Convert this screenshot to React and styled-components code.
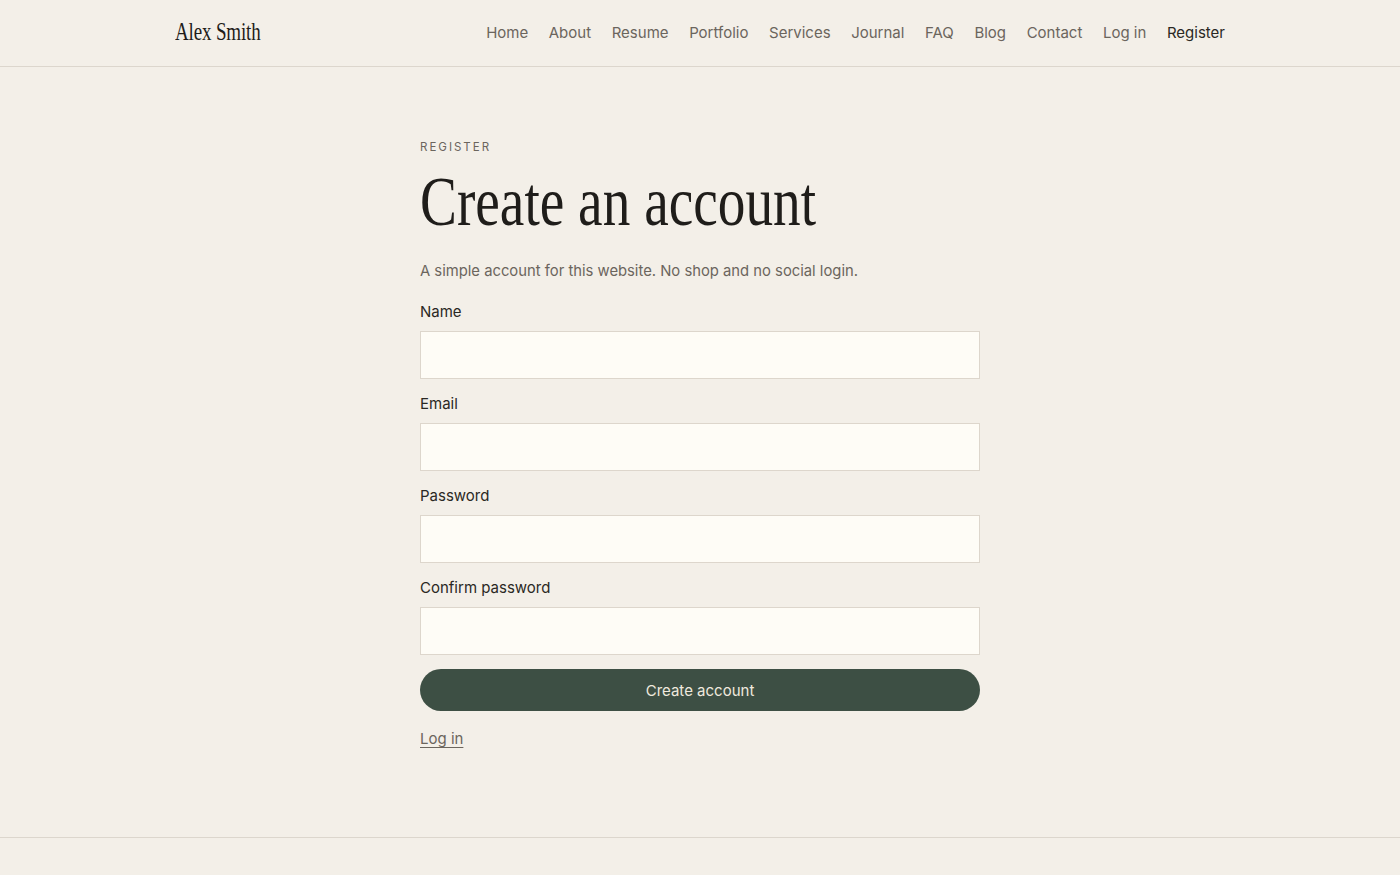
import React from 'react'
import styled, { createGlobalStyle } from 'styled-components'

const navLinks = [
  'Home',
  'About',
  'Resume',
  'Portfolio',
  'Services',
  'Journal',
  'FAQ',
  'Blog',
  'Contact',
  'Log in',
  'Register'
]

const fields = [
  { id: 'name', label: 'Name', type: 'text' },
  { id: 'email', label: 'Email', type: 'email' },
  { id: 'password', label: 'Password', type: 'password' },
  { id: 'confirm', label: 'Confirm password', type: 'password' }
]

export default function App() {
  return (
    <>
      <GlobalStyle />
      <Header>
        <HeaderInner>
          <Logo href="#">Alex Smith</Logo>
          <Nav>
            {navLinks.map(link => (
              <NavLink key={link} href="#" $active={link === 'Register'}>
                {link}
              </NavLink>
            ))}
          </Nav>
        </HeaderInner>
      </Header>

      <Main>
        <Column>
          <Eyebrow>Register</Eyebrow>
          <Title>
            <span>Create an account</span>
          </Title>
          <Lead>A simple account for this website. No shop and no social login.</Lead>

          <Form onSubmit={e => e.preventDefault()}>
            {fields.map(field => (
              <Field key={field.id}>
                <Label htmlFor={field.id}>{field.label}</Label>
                <Input id={field.id} type={field.type} />
              </Field>
            ))}
            <Submit type="submit">Create account</Submit>
          </Form>

          <LoginLink href="#">Log in</LoginLink>
        </Column>
      </Main>

      <Footer />
    </>
  )
}

const GlobalStyle = createGlobalStyle`
  * { box-sizing: border-box; }
  body {
    margin: 0;
    background: #f3efe8;
    color: #1f1d1a;
    font-family: Inter, "Noto Sans", sans-serif;
  }
`

const Header = styled.header`
  height: 67px;
  border-bottom: 1px solid #dcd6cd;
`

const HeaderInner = styled.div`
  width: 1050px;
  height: 100%;
  margin: 0 auto;
  padding-bottom: 2px;
  display: flex;
  align-items: center;
  justify-content: space-between;
`

const Logo = styled.a`
  font-family: "Liberation Serif", serif;
  font-size: 25px;
  color: #1f1d1a;
  text-decoration: none;
  display: inline-block;
  transform: scaleX(0.76);
  transform-origin: left center;
  letter-spacing: -0.2px;
`

const Nav = styled.nav`
  display: flex;
  gap: 20.6px;
`

const NavLink = styled.a`
  font-size: 15px;
  color: ${p => (p.$active ? '#2a2824' : '#6b655d')};
  text-decoration: none;
`

const Main = styled.main`
  padding: 72px 0 88px;
  border-bottom: 1px solid #dcd6cd;
`

const Column = styled.div`
  width: 560px;
  margin: 0 auto;
`

const Eyebrow = styled.div`
  font-size: 11.5px;
  letter-spacing: 2px;
  text-transform: uppercase;
  color: #6b655d;
  line-height: 16px;
`

const Title = styled.h1`
  margin: 5px 0 0;
  font-family: "Liberation Serif", serif;
  font-weight: 400;
  font-size: 70px;
  line-height: 84px;
  white-space: nowrap;
  color: #1f1d1a;

  span {
    display: inline-block;
    transform: scaleX(0.79);
    transform-origin: left center;
  }
`

const Lead = styled.p`
  margin: 16px 0 0;
  font-size: 14.8px;
  line-height: 22px;
  color: #6b655d;
`

const Form = styled.form`
  margin-top: 20px;
  display: flex;
  flex-direction: column;
  gap: 15px;
`

const Field = styled.div`
  display: flex;
  flex-direction: column;
  gap: 9px;
`

const Label = styled.label`
  font-size: 15px;
  line-height: 20px;
  color: #2a2824;
`

const Input = styled.input`
  height: 48px;
  width: 100%;
  border: 1px solid #ddd6cc;
  background: #fefcf6;
  padding: 0 14px;
  font: inherit;
  font-size: 15px;
  outline: none;
`

const Submit = styled.button`
  height: 42px;
  margin-top: -1px;
  border: none;
  border-radius: 21px;
  background: #3d4f44;
  color: #efe9de;
  font-family: inherit;
  font-size: 15px;
  cursor: pointer;
`

const LoginLink = styled.a`
  display: inline-block;
  margin-top: 18px;
  font-size: 15px;
  line-height: 20px;
  color: #6b655d;
  text-decoration: underline;
  text-underline-offset: 3px;
`

const Footer = styled.footer`
  height: 40px;
`
